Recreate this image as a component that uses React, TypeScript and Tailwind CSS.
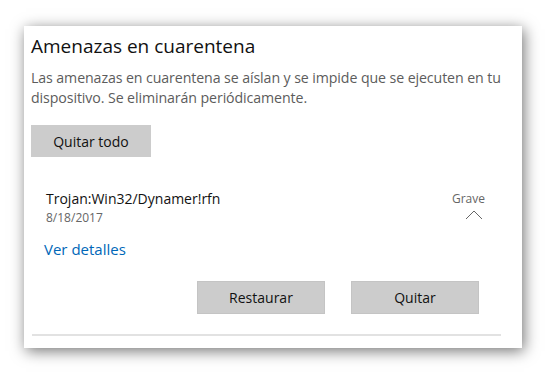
import React from "react";

export default function App() {
  return (
    <div
      className="w-[547px] h-[372px] bg-white pt-[26px] pl-[24px]"
      style={{ fontFamily: '"Open Sans", "Noto Sans", sans-serif' }}
    >
      <div className="w-[498px] h-[322px] bg-white shadow-[2px_3px_14px_rgba(0,0,0,0.55)] flex flex-col px-[7px]">
        <div className="mt-[7px] text-[19px] leading-[26px] text-[#111]">
          Amenazas en cuarentena
        </div>
        <div className="mt-[9px] text-[14.2px] leading-[20px] text-[#5c5c5c] tracking-[-0.1px] whitespace-nowrap">
          Las amenazas en cuarentena se aíslan y se impide que se ejecuten en tu
          <br />
          dispositivo. Se eliminarán periódicamente.
        </div>
        <div className="mt-[17px] flex">
          <button className="w-[120px] h-[32px] bg-[#cccccc] text-[14px] text-[#111]">
            Quitar todo
          </button>
        </div>
        <div className="mt-[32px] flex justify-between pl-[15px] pr-[30px]">
          <div className="flex flex-col">
            <div className="text-[14px] leading-[20px] text-[#111]">
              Trojan:Win32/Dynamer!rfn
            </div>
            <div className="mt-[1px] text-[12px] leading-[16px] text-[#666]">8/18/2017</div>
          </div>
          <div className="flex flex-col items-end pt-[1px]">
            <div className="text-[12px] leading-[18px] text-[#666]">Grave</div>
            <svg width="18" height="10" viewBox="0 0 18 10" className="mr-[2px] mt-[2px]">
              <path d="M1 9 L9 1 L17 9" fill="none" stroke="#666" strokeWidth="1" />
            </svg>
          </div>
        </div>
        <div className="mt-[13px] pl-[13px] text-[15px] leading-[20px] text-[#0067b8]">
          Ver detalles
        </div>
        <div className="mt-[22px] flex justify-end gap-[26px] pr-[36px]">
          <button className="w-[128px] h-[33px] bg-[#cccccc] border border-[#c4c4c4] text-[14px] text-[#111]">
            Restaurar
          </button>
          <button className="w-[128px] h-[33px] bg-[#cccccc] border border-[#c4c4c4] text-[14px] text-[#111]">
            Quitar
          </button>
        </div>
        <div className="mt-[20px] ml-[1px] mr-[14px] h-[2px] bg-[#e2e2e2]" />
      </div>
    </div>
  );
}
